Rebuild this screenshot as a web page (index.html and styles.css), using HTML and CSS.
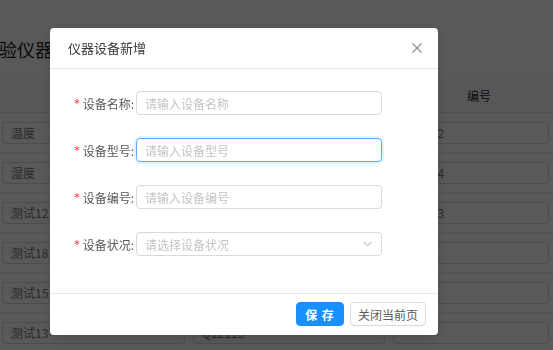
FILE: index.html
```html
<!DOCTYPE html>
<html lang="zh-CN">
<head>
<meta charset="utf-8">
<title>仪器设备新增</title>
<link rel="stylesheet" href="styles.css">
</head>
<body>
<div class="page">
  <h1 class="page-title">检验仪器设备管理</h1>
  <div class="table">
    <div class="thead">
      <div class="th"></div>
      <div class="th"></div>
      <div class="th th-code">编号</div>
    </div>
    <div class="tr"><div class="td"><span class="cell">温度</span></div><div class="td"><span class="cell">Q12111</span></div><div class="td"><span class="cell">Q12112</span></div></div>
    <div class="tr"><div class="td"><span class="cell">湿度</span></div><div class="td"><span class="cell">Q12112</span></div><div class="td"><span class="cell">Q12114</span></div></div>
    <div class="tr"><div class="td"><span class="cell">测试12</span></div><div class="td"><span class="cell">Q12113</span></div><div class="td"><span class="cell">Q12113</span></div></div>
    <div class="tr"><div class="td"><span class="cell">测试18</span></div><div class="td"><span class="cell">Q12113</span></div><div class="td"><span class="cell">Q1245</span></div></div>
    <div class="tr"><div class="td"><span class="cell">测试15</span></div><div class="td"><span class="cell">Q12113</span></div><div class="td"><span class="cell"></span></div></div>
    <div class="tr"><div class="td"><span class="cell">测试13</span></div><div class="td"><span class="cell">Q12113</span></div><div class="td"><span class="cell"></span></div></div>
  </div>
</div>

<div class="mask"></div>

<div class="modal" role="dialog">
  <div class="modal-header">
    <span class="modal-title">仪器设备新增</span>
    <button class="modal-close" aria-label="关闭">
      <svg width="10" height="10" viewBox="0 0 10 10"><path d="M0.5 0.5L9.5 9.5M9.5 0.5L0.5 9.5" stroke="#8c8c8c" stroke-width="1.1" fill="none"/></svg>
    </button>
  </div>
  <div class="modal-body">
    <div class="form-row">
      <label class="form-label"><span class="req">*</span>设备名称:</label>
      <div class="input"><span class="placeholder">请输入设备名称</span></div>
    </div>
    <div class="form-row">
      <label class="form-label"><span class="req">*</span>设备型号:</label>
      <div class="input input-focus"><span class="placeholder">请输入设备型号</span></div>
    </div>
    <div class="form-row">
      <label class="form-label"><span class="req">*</span>设备编号:</label>
      <div class="input"><span class="placeholder">请输入设备编号</span></div>
    </div>
    <div class="form-row">
      <label class="form-label"><span class="req">*</span>设备状况:</label>
      <div class="input select"><span class="placeholder">请选择设备状况</span>
        <svg class="arrow" width="9" height="6" viewBox="0 0 9 6"><path d="M0.5 0.8L4.5 4.8L8.5 0.8" stroke="#bfbfbf" stroke-width="1.1" fill="none"/></svg>
      </div>
    </div>
  </div>
  <div class="modal-footer">
    <button class="btn btn-primary">保 存</button>
    <button class="btn btn-default">关闭当前页</button>
  </div>
</div>
</body>
</html>
```

FILE: styles.css
```css
* { box-sizing: border-box; }
html, body { margin: 0; padding: 0; }
body {
  width: 553px;
  height: 350px;
  overflow: hidden;
  font-family: "Noto Sans CJK SC", "Noto Sans", "Liberation Sans", sans-serif;
  background: #fff;
  color: #595959;
}

.page { width: 553px; }
.page-title {
  margin: 0 0 0 -19px;
  padding-top: 37px;
  font-size: 18px;
  line-height: 24px;
  font-weight: normal;
  color: #222;
  white-space: nowrap;
}

.table { margin: 17px 0 0 -2px; width: 555px; }
.thead, .tr {
  display: grid;
  grid-template-columns: 191px 200px 1fr;
}
.thead { height: 35px; background: #fafafa; border-bottom: 1px solid #e8e8e8; }
.th { display: flex; align-items: center; font-size: 12px; color: #222; }
.th-code { padding-left: 78px; }
.tr { height: 40px; border-bottom: 1px solid #eee; }
.td { display: flex; align-items: center; padding: 0 4px; }
.cell {
  display: flex;
  align-items: center;
  width: 100%;
  height: 22px;
  border: 1px solid #d9d9d9;
  border-radius: 3px;
  padding-left: 8px;
  font-size: 12px;
  color: #777;
}

.mask {
  position: fixed;
  inset: 0;
  background: rgba(0, 0, 0, 0.65);
}

.modal {
  position: fixed;
  left: 50px;
  top: 28px;
  width: 388px;
  background: #fff;
  border-radius: 4px;
  box-shadow: 0 4px 12px rgba(0, 0, 0, 0.15);
}
.modal-header {
  height: 41px;
  border-bottom: 1px solid #e8e8e8;
  display: flex;
  align-items: center;
  justify-content: space-between;
  padding: 0 16px 0 18px;
}
.modal-title { font-size: 13px; color: #3a3a3a; line-height: 20px; }
.modal-close {
  border: 0;
  background: none;
  padding: 0;
  width: 10px;
  height: 10px;
  display: flex;
}

.modal-body {
  padding: 22px 0 37px;
  display: flex;
  flex-direction: column;
  gap: 23px;
}
.form-row { display: flex; align-items: center; height: 24px; }
.form-label {
  width: 84px;
  display: flex;
  justify-content: flex-end;
  align-items: center;
  font-size: 12px;
  color: #595959;
  white-space: nowrap;
}
.req { color: #f5222d; margin-right: 3px; font-family: "DejaVu Sans", sans-serif; font-size: 11px; }
.input {
  margin-left: 2px;
  width: 246px;
  height: 24px;
  border: 1px solid #d9d9d9;
  border-radius: 4px;
  padding: 0 8px;
  display: flex;
  align-items: center;
  justify-content: space-between;
}
.input-focus {
  border-color: #5cadff;
  box-shadow: 0 0 0 2px rgba(24, 144, 255, 0.12);
}
.placeholder { font-size: 12px; color: #c4c4c4; }
.select .arrow { margin-right: 1px; }

.modal-footer {
  border-top: 1px solid #e8e8e8;
  padding: 8px 12px 9px;
  display: flex;
  justify-content: flex-end;
  gap: 6px;
}
.btn {
  height: 24px;
  border-radius: 4px;
  font-family: inherit;
  font-size: 12px;
  padding: 0;
  cursor: pointer;
}
.btn-primary {
  width: 48px;
  background: #1890ff;
  border: 1px solid #1890ff;
  color: #fff;
  font-weight: bold;
  letter-spacing: 1px;
}
.btn-default {
  width: 76px;
  background: #fff;
  border: 1px solid #d9d9d9;
  color: #595959;
}
```
